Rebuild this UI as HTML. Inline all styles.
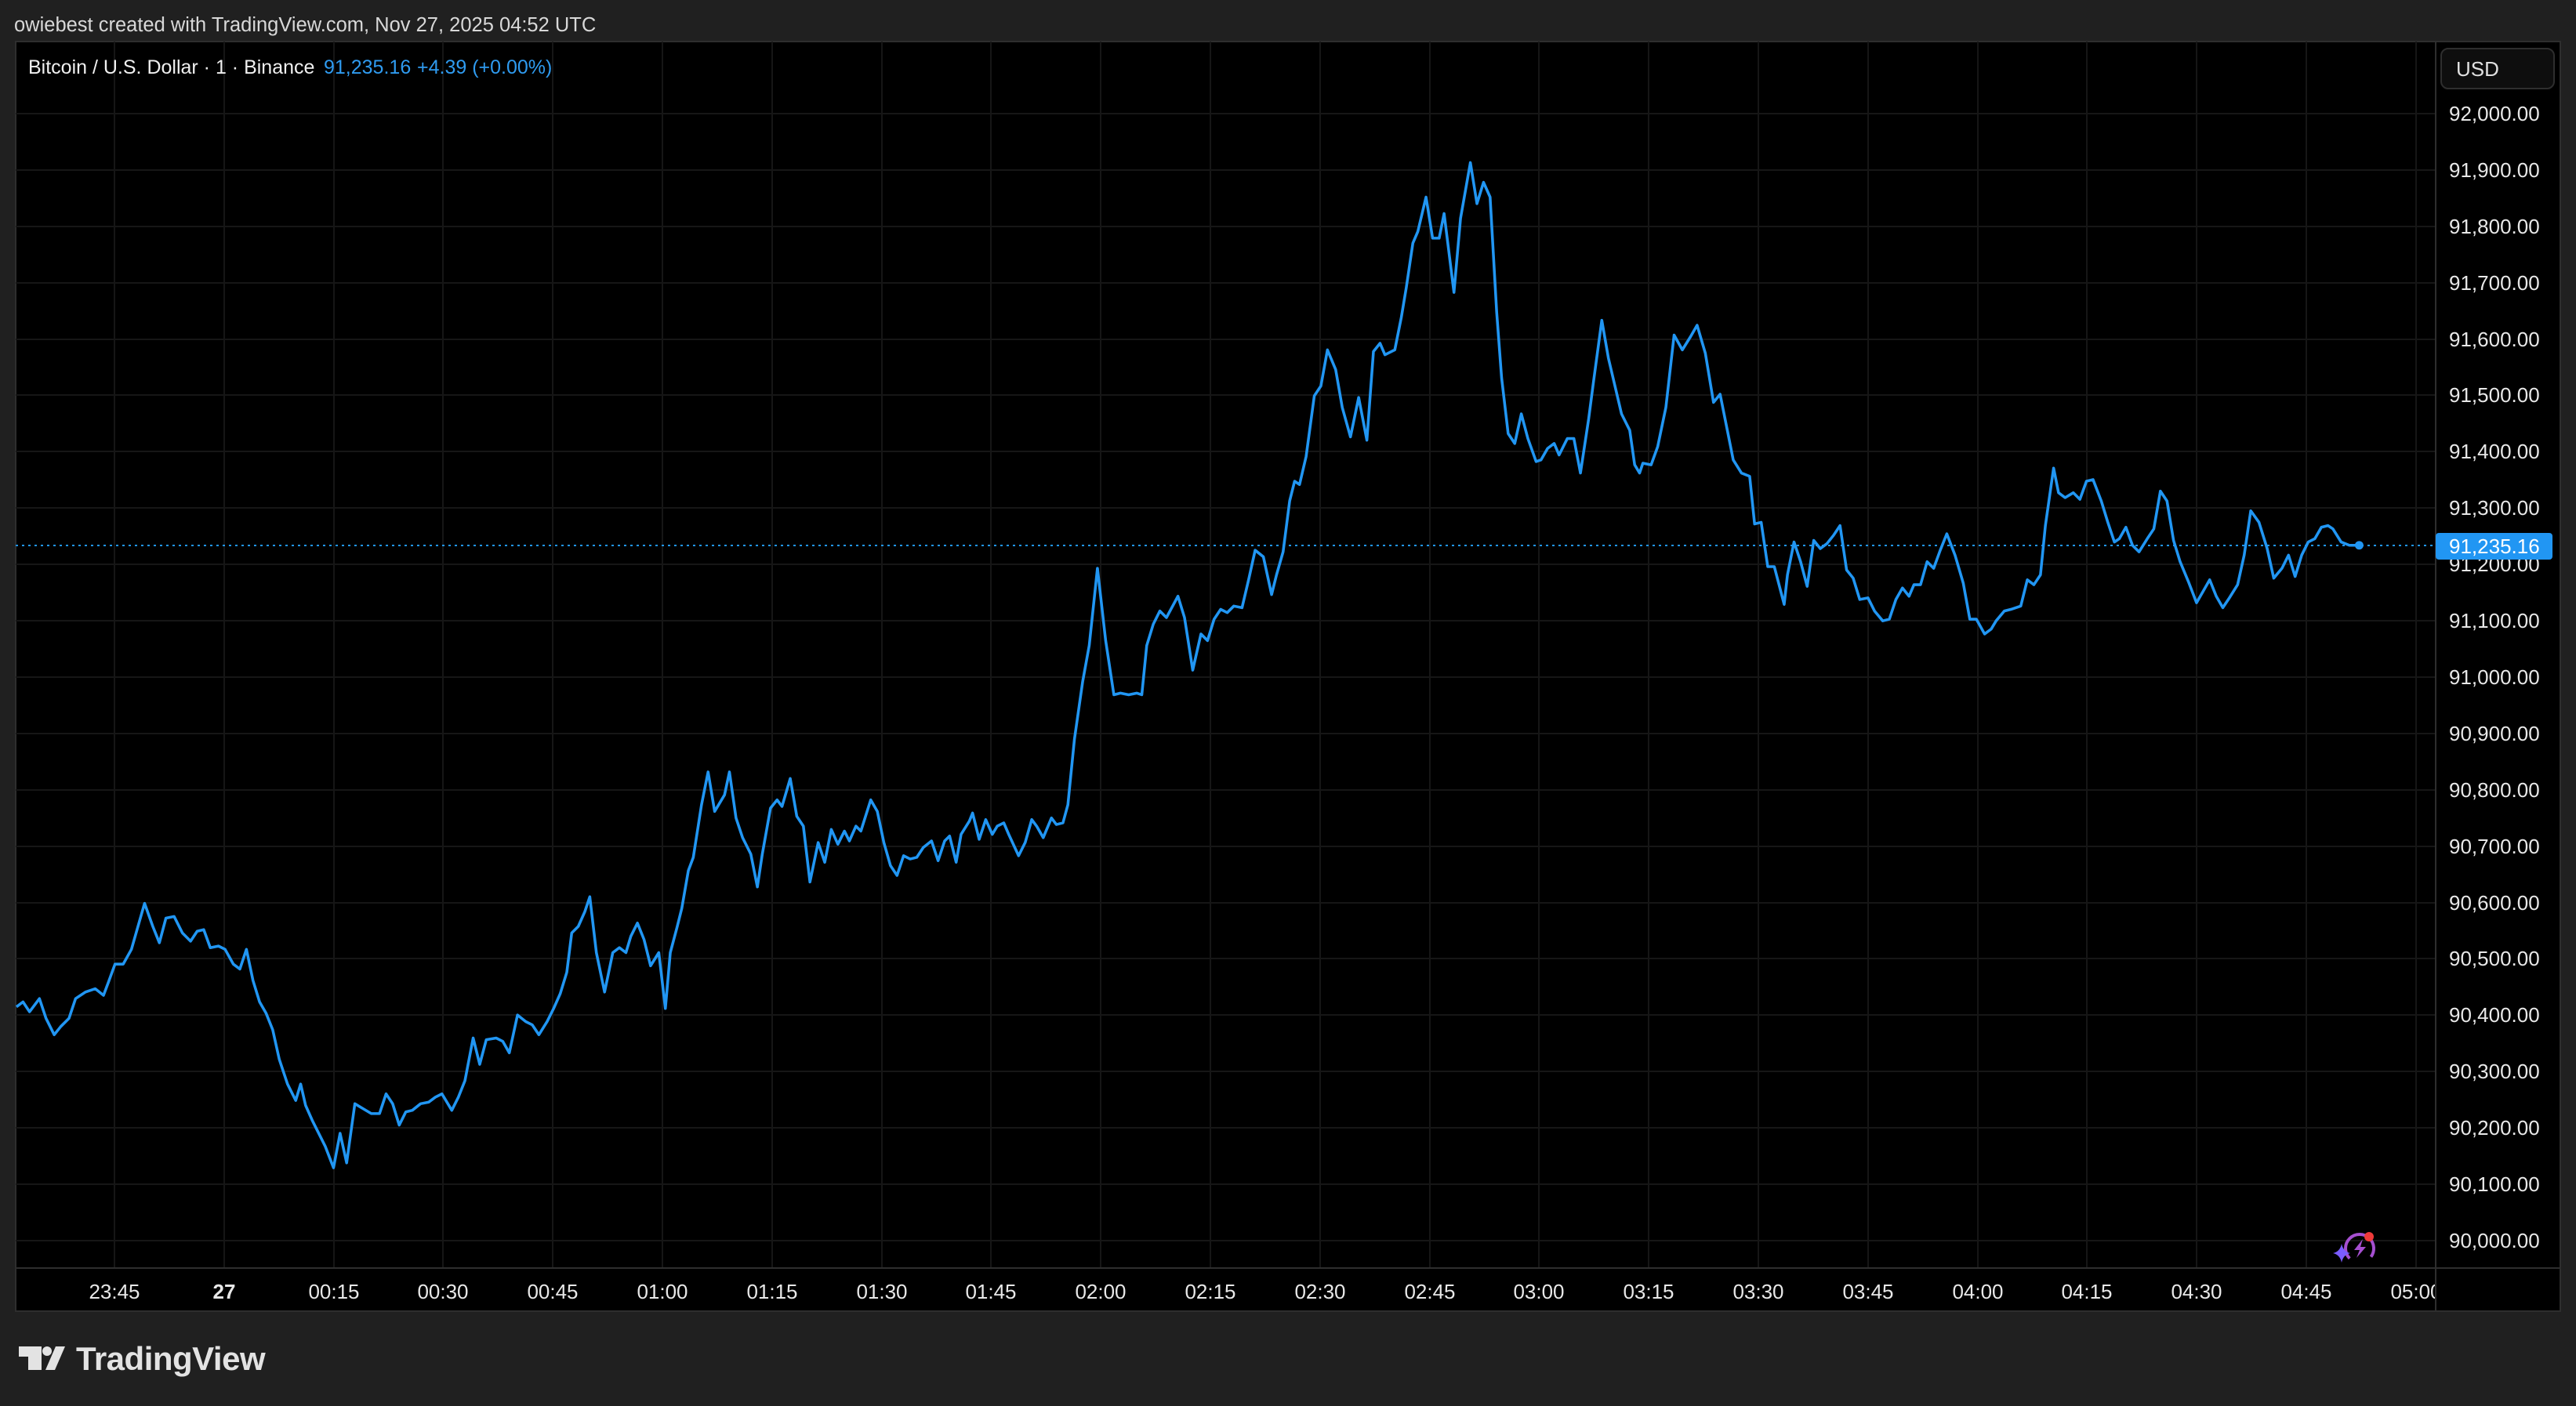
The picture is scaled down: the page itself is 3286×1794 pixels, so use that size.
<!DOCTYPE html>
<html><head><meta charset="utf-8"><style>
html,body{margin:0;padding:0;background:#202020;width:3286px;height:1794px;overflow:hidden}
svg{display:block}
text{font-family:"Liberation Sans",sans-serif}
</style></head><body>
<svg width="3286" height="1794" viewBox="0 0 3286 1794" xmlns="http://www.w3.org/2000/svg">
<rect width="3286" height="1794" fill="#202020"/>
<text x="18" y="40" font-size="25.5" fill="#d8d8d8">owiebest created with TradingView.com, Nov 27, 2025 04:52 UTC</text>
<rect x="20" y="53" width="3246" height="1620" fill="#000" stroke="#2e2e2e" stroke-width="2"/>
<g stroke="#161616" stroke-width="2">
<line x1="20" x2="3107" y1="145" y2="145"/><line x1="20" x2="3107" y1="217" y2="217"/><line x1="20" x2="3107" y1="289" y2="289"/><line x1="20" x2="3107" y1="361" y2="361"/><line x1="20" x2="3107" y1="433" y2="433"/><line x1="20" x2="3107" y1="504" y2="504"/><line x1="20" x2="3107" y1="576" y2="576"/><line x1="20" x2="3107" y1="648" y2="648"/><line x1="20" x2="3107" y1="720" y2="720"/><line x1="20" x2="3107" y1="792" y2="792"/><line x1="20" x2="3107" y1="864" y2="864"/><line x1="20" x2="3107" y1="936" y2="936"/><line x1="20" x2="3107" y1="1008" y2="1008"/><line x1="20" x2="3107" y1="1080" y2="1080"/><line x1="20" x2="3107" y1="1152" y2="1152"/><line x1="20" x2="3107" y1="1223" y2="1223"/><line x1="20" x2="3107" y1="1295" y2="1295"/><line x1="20" x2="3107" y1="1367" y2="1367"/><line x1="20" x2="3107" y1="1439" y2="1439"/><line x1="20" x2="3107" y1="1511" y2="1511"/><line x1="20" x2="3107" y1="1583" y2="1583"/>
<line y1="53" y2="1618" x1="146" x2="146"/><line y1="53" y2="1618" x1="286" x2="286"/><line y1="53" y2="1618" x1="426" x2="426"/><line y1="53" y2="1618" x1="565" x2="565"/><line y1="53" y2="1618" x1="705" x2="705"/><line y1="53" y2="1618" x1="845" x2="845"/><line y1="53" y2="1618" x1="985" x2="985"/><line y1="53" y2="1618" x1="1125" x2="1125"/><line y1="53" y2="1618" x1="1264" x2="1264"/><line y1="53" y2="1618" x1="1404" x2="1404"/><line y1="53" y2="1618" x1="1544" x2="1544"/><line y1="53" y2="1618" x1="1684" x2="1684"/><line y1="53" y2="1618" x1="1824" x2="1824"/><line y1="53" y2="1618" x1="1963" x2="1963"/><line y1="53" y2="1618" x1="2103" x2="2103"/><line y1="53" y2="1618" x1="2243" x2="2243"/><line y1="53" y2="1618" x1="2383" x2="2383"/><line y1="53" y2="1618" x1="2523" x2="2523"/><line y1="53" y2="1618" x1="2662" x2="2662"/><line y1="53" y2="1618" x1="2802" x2="2802"/><line y1="53" y2="1618" x1="2942" x2="2942"/><line y1="53" y2="1618" x1="3082" x2="3082"/>
</g>
<line x1="20" x2="3266" y1="1618" y2="1618" stroke="#2e2e2e" stroke-width="2"/>
<line x1="3107" x2="3107" y1="53" y2="1673" stroke="#2e2e2e" stroke-width="2"/>
<line x1="20" x2="3107" y1="696" y2="696" stroke="#2196f3" stroke-width="2" stroke-dasharray="3 5"/>
<text x="36" y="94" font-size="25" fill="#f0f0f0">Bitcoin / U.S. Dollar · 1 · Binance</text>
<text x="413" y="94" font-size="25" fill="#2f9bf0">91,235.16</text>
<text x="532" y="94" font-size="25" fill="#2f9bf0">+4.39 (+0.00%)</text>
<rect x="3114" y="62" width="144" height="51" rx="9" fill="#0e0e0e" stroke="#2e2e2e" stroke-width="2"/>
<text x="3133" y="97" font-size="26" fill="#e0e0e0">USD</text>
<g font-size="26" fill="#e8e8e8">
<text x="3124" y="154">92,000.00</text><text x="3124" y="226">91,900.00</text><text x="3124" y="298">91,800.00</text><text x="3124" y="370">91,700.00</text><text x="3124" y="442">91,600.00</text><text x="3124" y="513">91,500.00</text><text x="3124" y="585">91,400.00</text><text x="3124" y="657">91,300.00</text><text x="3124" y="729">91,200.00</text><text x="3124" y="801">91,100.00</text><text x="3124" y="873">91,000.00</text><text x="3124" y="945">90,900.00</text><text x="3124" y="1017">90,800.00</text><text x="3124" y="1089">90,700.00</text><text x="3124" y="1161">90,600.00</text><text x="3124" y="1232">90,500.00</text><text x="3124" y="1304">90,400.00</text><text x="3124" y="1376">90,300.00</text><text x="3124" y="1448">90,200.00</text><text x="3124" y="1520">90,100.00</text><text x="3124" y="1592">90,000.00</text>
</g>
<rect x="3107" y="680" width="149" height="34" rx="4" fill="#2196f3"/>
<text x="3124" y="706" font-size="26" fill="#fff">91,235.16</text>
<svg x="20" y="1620" width="3086" height="52" overflow="hidden">
<g font-size="26" fill="#e8e8e8" text-anchor="middle" transform="translate(-20,-1620)">
<text x="146" y="1657">23:45</text><text x="286" y="1657" font-weight="bold">27</text><text x="426" y="1657">00:15</text><text x="565" y="1657">00:30</text><text x="705" y="1657">00:45</text><text x="845" y="1657">01:00</text><text x="985" y="1657">01:15</text><text x="1125" y="1657">01:30</text><text x="1264" y="1657">01:45</text><text x="1404" y="1657">02:00</text><text x="1544" y="1657">02:15</text><text x="1684" y="1657">02:30</text><text x="1824" y="1657">02:45</text><text x="1963" y="1657">03:00</text><text x="2103" y="1657">03:15</text><text x="2243" y="1657">03:30</text><text x="2383" y="1657">03:45</text><text x="2523" y="1657">04:00</text><text x="2662" y="1657">04:15</text><text x="2802" y="1657">04:30</text><text x="2942" y="1657">04:45</text><text x="3082" y="1657">05:00</text>
</g></svg>
<g transform="scale(2.0957)">
<polyline fill="none" stroke="#2196f3" stroke-width="1.7" stroke-linejoin="round" points="10,613 14,610 18,616 24,608 28,620 33,630 37,625 42,620 46,608 52,604 58,602 63,606 66,598 70,587 75,587 80,578 88,550 93,564 97,574 101,559 106,558 111,568 116,573 120,567 124,566 128,577 133,576 137,578 142,587 146,590 150,578 154,597 158,610 162,617 166,627 170,645 175,660 180,670 183,660 186,673 190,682 194,690 198,698 203,711 207,690 211,708 216,672 221,675 226,678 231,678 235,666 239,672 243,685 247,677 251,676 256,672 261,671 265,668 269,666 275,676 279,668 283,658 288,632 292,648 296,633 302,632 306,634 310,641 315,618 320,622 324,624 328,630 333,622 337,614 341,605 345,592 348,568 352,564 356,555 359,546 363,580 368,604 373,580 377,577 381,580 384,570 388,562 392,572 396,588 401,580 405,614 408,580 412,565 415,553 419,530 422,522 427,490 431,470 435,494 441,484 444,470 448,498 452,510 457,520 461,540 464,520 469,492 473,487 476,491 481,474 485,497 489,503 493,537 498,513 502,525 506,505 510,514 514,506 517,512 521,503 524,506 530,487 534,494 538,513 542,527 546,533 550,521 554,523 558,522 562,516 567,512 571,524 575,512 578,509 582,525 585,508 590,500 592,495 596,511 600,499 604,508 607,503 611,501 614,508 620,521 624,513 628,499 631,503 635,510 640,498 643,502 647,501 650,490 654,450 659,415 663,393 668,346 673,390 678,423 682,422 687,423 692,422 695,423 698,393 702,380 706,372 710,376 717,363 721,376 726,408 731,386 735,390 739,377 743,371 747,373 751,369 756,370 760,353 764,335 769,339 774,362 777,350 781,336 785,305 788,293 791,295 795,278 800,241 804,235 808,213 813,225 817,248 822,266 827,242 832,268 836,214 840,209 843,216 849,213 853,193 856,175 860,148 863,141 868,120 872,145 876,145 879,130 885,178 889,133 895,99 899,124 903,111 907,120 911,190 914,230 918,264 922,270 926,252 930,267 935,281 938,280 942,273 946,270 949,277 954,267 958,267 962,288 967,255 970,232 975,195 979,218 983,235 987,252 992,262 995,283 998,288 1000,282 1005,283 1009,272 1014,248 1019,204 1024,213 1029,205 1033,198 1038,215 1043,245 1047,240 1050,255 1055,280 1060,288 1065,290 1068,319 1072,318 1076,345 1080,345 1086,368 1088,350 1092,330 1096,342 1100,357 1104,329 1108,334 1112,331 1116,326 1120,320 1124,347 1128,352 1132,365 1137,364 1141,372 1146,378 1150,377 1154,365 1158,358 1162,363 1165,356 1169,356 1173,342 1177,346 1181,335 1185,325 1190,338 1195,355 1199,377 1203,377 1208,386 1212,383 1215,378 1220,372 1224,371 1230,369 1234,353 1238,356 1242,350 1245,320 1250,285 1253,300 1257,303 1262,300 1266,304 1270,293 1274,292 1279,305 1283,318 1287,330 1290,328 1294,321 1298,332 1302,336 1307,328 1311,322 1315,299 1319,305 1323,329 1327,342 1332,354 1337,367 1341,360 1345,353 1349,363 1353,370 1357,364 1362,356 1366,338 1370,311 1375,318 1380,334 1384,352 1389,346 1393,338 1397,351 1401,338 1405,330 1409,328 1413,321 1417,320 1420,322 1425,330 1430,332 1435,332"/>
<circle cx="1436" cy="332" r="2.6" fill="#2196f3"/>
</g>
<g transform="translate(3010,1593)">
<circle cx="0" cy="0" r="18" fill="none" stroke="#a54fd0" stroke-width="4" stroke-dasharray="82 31" transform="rotate(135)"/>
<path d="M4,-12 L-7,2 L0,2 L-4,12 L8,-2 L1,-2 Z" fill="#a54fd0"/>
<path d="M-23,-6 Q-21,4 -12,6 Q-21,8 -23,18 Q-25,8 -34,6 Q-25,4 -23,-6 Z" fill="#7a5cff"/>
<circle cx="12" cy="-15" r="6" fill="#ee3a3a"/>
</g>
<g fill="#e3e3e3">
<path d="M24,1718 H53 V1748 H36 V1731 H24 Z"/>
<circle cx="60" cy="1724" r="6"/>
<path d="M71,1718 H83 L70,1748 H58 Z"/>
</g>
<text x="97" y="1748" font-size="42" font-weight="bold" fill="#e3e3e3" letter-spacing="-0.5">TradingView</text>
</svg>
</body></html>
